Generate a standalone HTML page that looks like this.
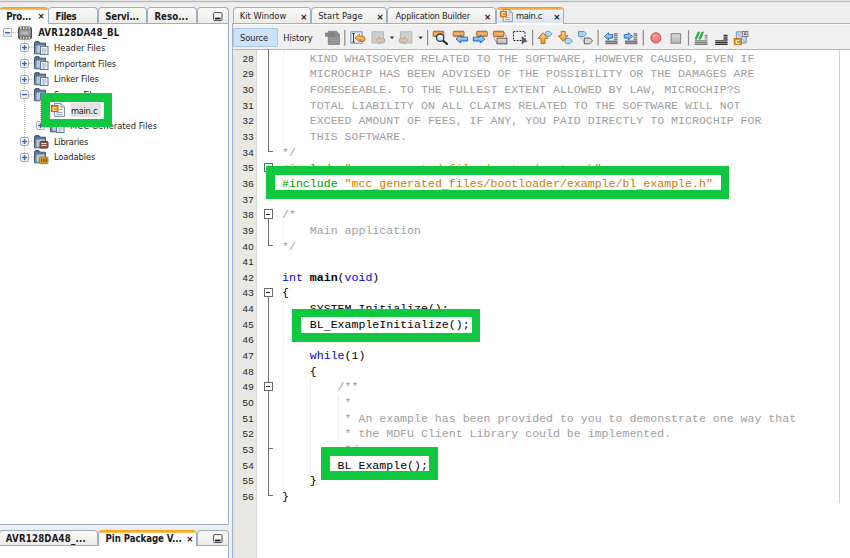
<!DOCTYPE html>
<html><head><meta charset="utf-8"><title>main.c</title>
<style>
*{box-sizing:border-box;margin:0;padding:0}
html,body{width:850px;height:558px;overflow:hidden;background:#fff}
body{position:relative;font-family:"DejaVu Sans Condensed","DejaVu Sans","Liberation Sans",sans-serif;font-stretch:condensed;font-size:9.25px;color:#111}
.a{position:absolute}
.code{position:absolute;left:282.0px;white-space:pre;font-family:"Liberation Mono",monospace;font-size:11.58px;line-height:15.645px;height:15.645px;color:#000}
.c{color:#a0a0a0}.k{color:#0000e6}.p{color:#009900}.s{color:#ce7b00}.b{font-weight:bold}.u{position:relative;top:2px}
.ln{position:absolute;left:232.5px;width:21.5px;text-align:right;font-family:"Liberation Sans",sans-serif;font-size:9.8px;letter-spacing:0.3px;line-height:15.645px;height:15.645px;color:#262626}
.g{position:absolute;background:#0fc83f}
.w{position:absolute;background:#fff}
</style></head><body>

<div class="a" style="left:0;top:0;width:850px;height:24px;background:#eeeeee"></div>
<div class="a" style="left:0;top:0;width:850px;height:1px;background:#e2e2e2"></div>
<div class="a" style="left:0;top:1px;width:850px;height:1px;background:#b9b9b9"></div>
<div class="a" style="left:0;top:2px;width:850px;height:1px;background:#e4e4e4"></div>
<div class="a" style="left:229px;top:23px;width:4px;height:535px;background:#f4f4f4"></div>
<div class="a" style="left:0;top:525px;width:233px;height:33px;background:#eeeeee"></div>
<div class="a" style="left:-1px;top:22.5px;width:230px;height:502.6px;background:#fff;border:1px solid #9db0c9"></div>
<div class="a" style="left:48px;top:7px;width:50px;height:16px;background:linear-gradient(#f9f9f6,#ecece8);border:1px solid #9db0c9;border-bottom:none;border-radius:4px 4px 0 0"></div>
<div class="a" style="left:98px;top:7px;width:49px;height:16px;background:linear-gradient(#f9f9f6,#ecece8);border:1px solid #9db0c9;border-bottom:none;border-radius:4px 4px 0 0"></div>
<div class="a" style="left:147px;top:7px;width:49.5px;height:16px;background:linear-gradient(#f9f9f6,#ecece8);border:1px solid #9db0c9;border-bottom:none;border-radius:4px 4px 0 0"></div>
<div class="a" style="left:196.5px;top:7px;width:32.5px;height:16px;background:linear-gradient(#f9f9f6,#ecece8);border:1px solid #9db0c9;border-bottom:none;border-radius:4px 4px 0 0"></div>
<div class="a" style="left:-1px;top:7.2px;width:49.5px;height:17.0px;background:#fff;border:1px solid #9db0c9;border-bottom:none;border-top:none;border-radius:4px 4px 0 0;overflow:hidden"><div class="a" style="left:-1px;top:0;right:-1px;height:3px;background:linear-gradient(#f29a14,#fbc565);border-radius:4px 4px 0 0"></div></div>
<div class="a" style="left:6.20px;top:9.88px;font-size:9.6px;line-height:14px;height:14px;white-space:nowrap;letter-spacing:-0.272px;color:#1b1b22;font-weight:bold;">Pro...</div>
<div class="a" style="left:36.10px;top:10.10px;width:10px;height:12px;line-height:12px;text-align:center;font-family:'DejaVu Sans','Liberation Sans',sans-serif;font-stretch:normal;font-weight:bold;font-size:8.600px;color:#151515">×</div>
<div class="a" style="left:55.60px;top:9.88px;font-size:9.6px;line-height:14px;height:14px;white-space:nowrap;letter-spacing:-0.453px;color:#1b1b22;font-weight:bold;">Files</div>
<div class="a" style="left:105.20px;top:9.88px;font-size:9.6px;line-height:14px;height:14px;white-space:nowrap;letter-spacing:-0.136px;color:#1b1b22;font-weight:bold;">Servi...</div>
<div class="a" style="left:154.40px;top:9.88px;font-size:9.6px;line-height:14px;height:14px;white-space:nowrap;letter-spacing:0.063px;color:#1b1b22;font-weight:bold;">Reso...</div>
<svg class="a" style="left:213px;top:11.5px" width="10" height="10" viewBox="0 0 10 10"><rect x="0.600" y="0.600" width="8.400" height="8" rx="1" fill="#f7f7f7" stroke="#4c4c4c" stroke-width="1"/><rect x="2" y="5.600" width="5.600" height="1.800" fill="#1e1e1e"/></svg>
<div class="a" style="left:23.5px;top:39px;width:0;height:118.2px;border-left:1px dotted #b9b9b9"></div>
<div class="a" style="left:12px;top:31.7px;width:6px;height:0;border-top:1px dotted #b9b9b9"></div>
<svg class="a" style="left:2.60px;top:27.70px" width="9.4" height="9.4" viewBox="0 0 9.4 9.4"><rect x="0.5" y="0.5" width="8.4" height="8.4" rx="1.6" fill="#fbfbfc" stroke="#a3a7ae" stroke-width="1"/><rect x="1.3" y="5.0" width="6.800000000000001" height="2.8000000000000003" fill="#e6e8ec"/><path d="M2.1 4.7 H7.300000000000001" stroke="#4567b8" stroke-width="1.4"/></svg>
<svg class="a" style="left:18px;top:25.500px" width="14" height="14" viewBox="0 0 14 14"><defs><linearGradient id="cg" x1="0" y1="0" x2="0" y2="1"><stop offset="0" stop-color="#6a6a6a"/><stop offset="0.5" stop-color="#8c8c8c"/><stop offset="1" stop-color="#5c5c5c"/></linearGradient></defs><rect x="0.5" y="1" width="13" height="12" rx="1.8" fill="url(#cg)" stroke="#4a4a4a"/><rect x="1.5" y="4.300" width="11" height="5.400" fill="#9a9a9a"/><rect x="3.500" y="5.600" width="7" height="2.800" fill="#b8b8b8"/><path d="M2.800 1 V3.300 M5.600 1 V3.300 M8.400 1 V3.300 M11.200 1 V3.300 M2.800 10.700 V13 M5.600 10.700 V13 M8.400 10.700 V13 M11.200 10.700 V13" stroke="#d0d0d0" stroke-width="1.500"/></svg>
<div class="a" style="left:38.20px;top:25.98px;font-size:9.6px;line-height:14px;height:14px;white-space:nowrap;letter-spacing:0.115px;color:#1b1b22;font-weight:bold;">AVR128DA48_BL</div>
<div class="a" style="left:28px;top:47.3px;width:6px;height:0;border-top:1px dotted #b9b9b9"></div>
<svg class="a" style="left:19.50px;top:43.33px" width="9" height="9" viewBox="0 0 9 9"><rect x="0.5" y="0.5" width="8" height="8" rx="1.6" fill="#fbfbfc" stroke="#a3a7ae" stroke-width="1"/><rect x="1.3" y="4.8" width="6.4" height="2.6" fill="#e6e8ec"/><path d="M1.9 4.5 H7.1" stroke="#4567b8" stroke-width="1.4"/><path d="M4.5 1.9 V7.1" stroke="#4567b8" stroke-width="1.4"/></svg>
<svg class="a" style="left:34px;top:40.830000000000005px" width="15" height="14" viewBox="0 0 15 14"><defs><linearGradient id="fg" x1="0" y1="0" x2="0" y2="1"><stop offset="0" stop-color="#4e6784"/><stop offset="1" stop-color="#9db3cc"/></linearGradient></defs><path d="M0.5 2.2 Q0.5 0.6 2 0.6 L5 0.6 L6.5 2.2 L11.5 2.2 L11.5 12.8 L0.5 12.8 Z" fill="url(#fg)" stroke="#43597a" stroke-width="1"/><path d="M2 5.2 L3 4 L11 4 L11 12.3 L2 12.3 Z" fill="#b5c8dc" stroke="#5d7695" stroke-width="0.8"/><rect x="6.5" y="5.5" width="7.5" height="8" fill="#f6f8fa" stroke="#61768f" stroke-width="1"/><path d="M8 8 H12.5 M8 10 H12.5 M8 12 H11.5" stroke="#93a3b7" stroke-width="1"/></svg>
<div class="a" style="left:54.10px;top:40.93px;font-size:9.25px;line-height:14px;height:14px;white-space:nowrap;letter-spacing:0.004px;color:#1b1b22;">Header Files</div>
<div class="a" style="left:28px;top:63.0px;width:6px;height:0;border-top:1px dotted #b9b9b9"></div>
<svg class="a" style="left:19.50px;top:58.96px" width="9" height="9" viewBox="0 0 9 9"><rect x="0.5" y="0.5" width="8" height="8" rx="1.6" fill="#fbfbfc" stroke="#a3a7ae" stroke-width="1"/><rect x="1.3" y="4.8" width="6.4" height="2.6" fill="#e6e8ec"/><path d="M1.9 4.5 H7.1" stroke="#4567b8" stroke-width="1.4"/><path d="M4.5 1.9 V7.1" stroke="#4567b8" stroke-width="1.4"/></svg>
<svg class="a" style="left:34px;top:56.46000000000001px" width="15" height="14" viewBox="0 0 15 14"><defs><linearGradient id="fg" x1="0" y1="0" x2="0" y2="1"><stop offset="0" stop-color="#4e6784"/><stop offset="1" stop-color="#9db3cc"/></linearGradient></defs><path d="M0.5 2.2 Q0.5 0.6 2 0.6 L5 0.6 L6.5 2.2 L11.5 2.2 L11.5 12.8 L0.5 12.8 Z" fill="url(#fg)" stroke="#43597a" stroke-width="1"/><path d="M2 5.2 L3 4 L11 4 L11 12.3 L2 12.3 Z" fill="#b5c8dc" stroke="#5d7695" stroke-width="0.8"/><rect x="6.5" y="5.5" width="7.5" height="8" fill="#f6f8fa" stroke="#61768f" stroke-width="1"/><path d="M8 8 H12.5 M8 10 H12.5 M8 12 H11.5" stroke="#93a3b7" stroke-width="1"/></svg>
<div class="a" style="left:54.10px;top:56.56px;font-size:9.25px;line-height:14px;height:14px;white-space:nowrap;letter-spacing:0.000px;color:#1b1b22;">Important Files</div>
<div class="a" style="left:28px;top:78.6px;width:6px;height:0;border-top:1px dotted #b9b9b9"></div>
<svg class="a" style="left:19.50px;top:74.59px" width="9" height="9" viewBox="0 0 9 9"><rect x="0.5" y="0.5" width="8" height="8" rx="1.6" fill="#fbfbfc" stroke="#a3a7ae" stroke-width="1"/><rect x="1.3" y="4.8" width="6.4" height="2.6" fill="#e6e8ec"/><path d="M1.9 4.5 H7.1" stroke="#4567b8" stroke-width="1.4"/><path d="M4.5 1.9 V7.1" stroke="#4567b8" stroke-width="1.4"/></svg>
<svg class="a" style="left:34px;top:72.09px" width="15" height="14" viewBox="0 0 15 14"><defs><linearGradient id="fg" x1="0" y1="0" x2="0" y2="1"><stop offset="0" stop-color="#4e6784"/><stop offset="1" stop-color="#9db3cc"/></linearGradient></defs><path d="M0.5 2.2 Q0.5 0.6 2 0.6 L5 0.6 L6.5 2.2 L11.5 2.2 L11.5 12.8 L0.5 12.8 Z" fill="url(#fg)" stroke="#43597a" stroke-width="1"/><path d="M2 5.2 L3 4 L11 4 L11 12.3 L2 12.3 Z" fill="#b5c8dc" stroke="#5d7695" stroke-width="0.8"/><rect x="6.5" y="5.5" width="7.5" height="8" fill="#f6f8fa" stroke="#61768f" stroke-width="1"/><path d="M8 8 H12.5 M8 10 H12.5 M8 12 H11.5" stroke="#93a3b7" stroke-width="1"/></svg>
<div class="a" style="left:54.10px;top:72.19px;font-size:9.25px;line-height:14px;height:14px;white-space:nowrap;letter-spacing:-0.127px;color:#1b1b22;">Linker Files</div>
<div class="a" style="left:28px;top:94.2px;width:6px;height:0;border-top:1px dotted #b9b9b9"></div>
<svg class="a" style="left:19.50px;top:90.22px" width="9" height="9" viewBox="0 0 9 9"><rect x="0.5" y="0.5" width="8" height="8" rx="1.6" fill="#fbfbfc" stroke="#a3a7ae" stroke-width="1"/><rect x="1.3" y="4.8" width="6.4" height="2.6" fill="#e6e8ec"/><path d="M1.9 4.5 H7.1" stroke="#4567b8" stroke-width="1.4"/></svg>
<svg class="a" style="left:34px;top:87.72000000000001px" width="15" height="14" viewBox="0 0 15 14"><defs><linearGradient id="fg" x1="0" y1="0" x2="0" y2="1"><stop offset="0" stop-color="#4e6784"/><stop offset="1" stop-color="#9db3cc"/></linearGradient></defs><path d="M0.5 2.2 Q0.5 0.6 2 0.6 L5 0.6 L6.5 2.2 L11.5 2.2 L11.5 12.8 L0.5 12.8 Z" fill="url(#fg)" stroke="#43597a" stroke-width="1"/><path d="M2 5.2 L3 4 L11 4 L11 12.3 L2 12.3 Z" fill="#b5c8dc" stroke="#5d7695" stroke-width="0.8"/><rect x="6.5" y="5.5" width="7.5" height="8" fill="#f6f8fa" stroke="#61768f" stroke-width="1"/><path d="M8 8 H12.5 M8 10 H12.5 M8 12 H11.5" stroke="#93a3b7" stroke-width="1"/></svg>
<div class="a" style="left:54.10px;top:87.82px;font-size:9.25px;line-height:14px;height:14px;white-space:nowrap;letter-spacing:-0.264px;color:#1b1b22;">Source Files</div>
<div class="a" style="left:39.5px;top:99.7px;width:0;height:26.3px;border-left:1px dotted #b9b9b9"></div>
<div class="a" style="left:44px;top:125.5px;width:6px;height:0;border-top:1px dotted #b9b9b9"></div>
<svg class="a" style="left:35.50px;top:121.48px" width="9" height="9" viewBox="0 0 9 9"><rect x="0.5" y="0.5" width="8" height="8" rx="1.6" fill="#fbfbfc" stroke="#a3a7ae" stroke-width="1"/><rect x="1.3" y="4.8" width="6.4" height="2.6" fill="#e6e8ec"/><path d="M1.9 4.5 H7.1" stroke="#4567b8" stroke-width="1.4"/><path d="M4.5 1.9 V7.1" stroke="#4567b8" stroke-width="1.4"/></svg>
<svg class="a" style="left:50px;top:118.98px" width="15" height="14" viewBox="0 0 15 14"><defs><linearGradient id="fg" x1="0" y1="0" x2="0" y2="1"><stop offset="0" stop-color="#4e6784"/><stop offset="1" stop-color="#9db3cc"/></linearGradient></defs><path d="M0.5 2.2 Q0.5 0.6 2 0.6 L5 0.6 L6.5 2.2 L11.5 2.2 L11.5 12.8 L0.5 12.8 Z" fill="url(#fg)" stroke="#43597a" stroke-width="1"/><path d="M2 5.2 L3 4 L11 4 L11 12.3 L2 12.3 Z" fill="#b5c8dc" stroke="#5d7695" stroke-width="0.8"/><rect x="6.5" y="5.5" width="7.5" height="8" fill="#f6f8fa" stroke="#61768f" stroke-width="1"/><path d="M8 8 H12.5 M8 10 H12.5 M8 12 H11.5" stroke="#93a3b7" stroke-width="1"/></svg>
<div class="a" style="left:70.10px;top:119.08px;font-size:9.25px;line-height:14px;height:14px;white-space:nowrap;letter-spacing:0.025px;color:#1b1b22;">MCC Generated Files</div>
<div class="a" style="left:28px;top:141.1px;width:6px;height:0;border-top:1px dotted #b9b9b9"></div>
<svg class="a" style="left:19.50px;top:137.11px" width="9" height="9" viewBox="0 0 9 9"><rect x="0.5" y="0.5" width="8" height="8" rx="1.6" fill="#fbfbfc" stroke="#a3a7ae" stroke-width="1"/><rect x="1.3" y="4.8" width="6.4" height="2.6" fill="#e6e8ec"/><path d="M1.9 4.5 H7.1" stroke="#4567b8" stroke-width="1.4"/><path d="M4.5 1.9 V7.1" stroke="#4567b8" stroke-width="1.4"/></svg>
<svg class="a" style="left:34px;top:134.61px" width="15" height="14" viewBox="0 0 15 14"><defs><linearGradient id="fg" x1="0" y1="0" x2="0" y2="1"><stop offset="0" stop-color="#4e6784"/><stop offset="1" stop-color="#9db3cc"/></linearGradient></defs><path d="M0.5 2.2 Q0.5 0.6 2 0.6 L5 0.6 L6.5 2.2 L11.5 2.2 L11.5 12.8 L0.5 12.8 Z" fill="url(#fg)" stroke="#43597a" stroke-width="1"/><path d="M2 5.2 L3 4 L11 4 L11 12.3 L2 12.3 Z" fill="#b5c8dc" stroke="#5d7695" stroke-width="0.8"/><rect x="6" y="6.5" width="8" height="6.500" rx="1" fill="#8e5a46" stroke="#5d3a2c" stroke-width="1"/><path d="M7.5 8.500 H12.5 M7.5 10.500 H12.5" stroke="#f0d8c4" stroke-width="1"/></svg>
<div class="a" style="left:53.90px;top:134.71px;font-size:9.25px;line-height:14px;height:14px;white-space:nowrap;letter-spacing:-0.194px;color:#1b1b22;">Libraries</div>
<div class="a" style="left:28px;top:156.7px;width:6px;height:0;border-top:1px dotted #b9b9b9"></div>
<svg class="a" style="left:19.50px;top:152.74px" width="9" height="9" viewBox="0 0 9 9"><rect x="0.5" y="0.5" width="8" height="8" rx="1.6" fill="#fbfbfc" stroke="#a3a7ae" stroke-width="1"/><rect x="1.3" y="4.8" width="6.4" height="2.6" fill="#e6e8ec"/><path d="M1.9 4.5 H7.1" stroke="#4567b8" stroke-width="1.4"/><path d="M4.5 1.9 V7.1" stroke="#4567b8" stroke-width="1.4"/></svg>
<svg class="a" style="left:34px;top:150.24px" width="15" height="14" viewBox="0 0 15 14"><defs><linearGradient id="fg" x1="0" y1="0" x2="0" y2="1"><stop offset="0" stop-color="#4e6784"/><stop offset="1" stop-color="#9db3cc"/></linearGradient></defs><path d="M0.5 2.2 Q0.5 0.6 2 0.6 L5 0.6 L6.5 2.2 L11.5 2.2 L11.5 12.8 L0.5 12.8 Z" fill="url(#fg)" stroke="#43597a" stroke-width="1"/><path d="M2 5.2 L3 4 L11 4 L11 12.3 L2 12.3 Z" fill="#b5c8dc" stroke="#5d7695" stroke-width="0.8"/><rect x="5.500" y="7" width="8.500" height="6.500" rx="0.5" fill="#dfa32a" stroke="#9a7015" stroke-width="0.8"/><path d="M7.5 8.500 V12 M9.5 8.500 V12 M11 8.500 V12 M12.5 8.500 V12" stroke="#7a5200" stroke-width="0.9"/></svg>
<div class="a" style="left:53.90px;top:150.34px;font-size:9.25px;line-height:14px;height:14px;white-space:nowrap;letter-spacing:-0.089px;color:#1b1b22;">Loadables</div>
<div class="g" style="left:41px;top:93px;width:71px;height:34.3px"></div>
<div class="w" style="left:49.5px;top:102px;width:54.5px;height:16.8px"></div>
<div class="a" style="left:70.5px;top:103px;width:30.3px;height:14.4px;background:#e2e2e2"></div>
<div class="a" style="left:70.90px;top:103.65px;font-size:9.25px;line-height:14px;height:14px;white-space:nowrap;letter-spacing:-0.283px;color:#1b1b22;">main.c</div>
<svg class="a" style="left:51px;top:103px" width="14" height="14" viewBox="0 0 14 14"><path d="M3.5 0.5 H10 L13.5 4 V13.5 H3.5 Z" fill="#f3f5f8" stroke="#7d8ea3"/><path d="M10 0.5 V4 H13.5" fill="#dfe5ec" stroke="#7d8ea3"/><path d="M8 6.500 H11.5 M5.5 9.5 H11.5 M5.5 11.5 H11.5" stroke="#9aa8b8"/><rect x="0.5" y="2.5" width="6.5" height="6" fill="#ea8c1f" stroke="#c76c07"/><text x="3.800" y="7.700" text-anchor="middle" font-family="Liberation Sans, sans-serif" font-size="6.200" font-weight="bold" fill="#fff">C</text></svg>
<div class="a" style="left:-1px;top:544.6px;width:230px;height:15px;background:#fff;border:1px solid #9db0c9"></div>
<div class="a" style="left:-1px;top:529.8px;width:98.5px;height:15.200000000000045px;background:linear-gradient(#f9f9f6,#ecece8);border:1px solid #9db0c9;border-bottom:none;border-radius:4px 4px 0 0"></div>
<div class="a" style="left:197px;top:529.8px;width:32px;height:15.200000000000045px;background:linear-gradient(#f9f9f6,#ecece8);border:1px solid #9db0c9;border-bottom:none;border-radius:4px 4px 0 0"></div>
<div class="a" style="left:97.5px;top:530.0px;width:99.80000000000001px;height:16.200000000000045px;background:#fff;border:1px solid #9db0c9;border-bottom:none;border-top:none;border-radius:4px 4px 0 0;overflow:hidden"><div class="a" style="left:-1px;top:0;right:-1px;height:3px;background:linear-gradient(#f29a14,#fbc565);border-radius:4px 4px 0 0"></div></div>
<div class="a" style="left:5.80px;top:532.48px;font-size:9.6px;line-height:14px;height:14px;white-space:nowrap;letter-spacing:0.201px;color:#1b1b22;font-weight:bold;">AVR128DA48_...</div>
<div class="a" style="left:105.60px;top:532.48px;font-size:9.6px;line-height:14px;height:14px;white-space:nowrap;letter-spacing:-0.074px;color:#1b1b22;font-weight:bold;">Pin Package V...</div>
<div class="a" style="left:184.90px;top:532.90px;width:10px;height:12px;line-height:12px;text-align:center;font-family:'DejaVu Sans','Liberation Sans',sans-serif;font-stretch:normal;font-weight:bold;font-size:8.600px;color:#151515">×</div>
<svg class="a" style="left:213px;top:534px" width="10" height="10" viewBox="0 0 10 10"><rect x="0.600" y="0.600" width="8.400" height="8" rx="1" fill="#f7f7f7" stroke="#4c4c4c" stroke-width="1"/><rect x="2" y="5.600" width="5.600" height="1.800" fill="#1e1e1e"/></svg>
<div class="a" style="left:232px;top:22.5px;width:620px;height:540px;background:#fff;border:1px solid #9db0c9"></div>
<div class="a" style="left:232.5px;top:7px;width:78.0px;height:16px;background:linear-gradient(#f9f9f6,#ecece8);border:1px solid #9db0c9;border-bottom:none;border-radius:4px 4px 0 0"></div>
<div class="a" style="left:310.5px;top:7px;width:76.5px;height:16px;background:linear-gradient(#f9f9f6,#ecece8);border:1px solid #9db0c9;border-bottom:none;border-radius:4px 4px 0 0"></div>
<div class="a" style="left:387px;top:7px;width:108.80000000000001px;height:16px;background:linear-gradient(#f9f9f6,#ecece8);border:1px solid #9db0c9;border-bottom:none;border-radius:4px 4px 0 0"></div>
<div class="a" style="left:495.8px;top:7.2px;width:68.49999999999994px;height:17.0px;background:#fff;border:1px solid #9db0c9;border-bottom:none;border-top:none;border-radius:4px 4px 0 0;overflow:hidden"><div class="a" style="left:-1px;top:0;right:-1px;height:3px;background:linear-gradient(#f29a14,#fbc565);border-radius:4px 4px 0 0"></div></div>
<div class="a" style="left:496.8px;top:10px;width:66.5px;height:13px;background:linear-gradient(#f4f6fb,#d9e2f1)"></div>
<div class="a" style="left:239.80px;top:9.20px;font-size:9.25px;line-height:14px;height:14px;white-space:nowrap;letter-spacing:-0.008px;color:#1e1e26;">Kit Window</div>
<div class="a" style="left:298.80px;top:10.50px;width:10px;height:12px;line-height:12px;text-align:center;font-family:'DejaVu Sans','Liberation Sans',sans-serif;font-stretch:normal;font-weight:bold;font-size:8.600px;color:#151515">×</div>
<div class="a" style="left:318.20px;top:9.20px;font-size:9.25px;line-height:14px;height:14px;white-space:nowrap;letter-spacing:0.147px;color:#1e1e26;">Start Page</div>
<div class="a" style="left:375.10px;top:10.50px;width:10px;height:12px;line-height:12px;text-align:center;font-family:'DejaVu Sans','Liberation Sans',sans-serif;font-stretch:normal;font-weight:bold;font-size:8.600px;color:#151515">×</div>
<div class="a" style="left:395.60px;top:9.20px;font-size:9.25px;line-height:14px;height:14px;white-space:nowrap;letter-spacing:-0.221px;color:#1e1e26;">Application Builder</div>
<div class="a" style="left:482.70px;top:10.50px;width:10px;height:12px;line-height:12px;text-align:center;font-family:'DejaVu Sans','Liberation Sans',sans-serif;font-stretch:normal;font-weight:bold;font-size:8.600px;color:#151515">×</div>
<div class="a" style="left:516.10px;top:9.20px;font-size:9.25px;line-height:14px;height:14px;white-space:nowrap;letter-spacing:-0.343px;color:#1e1e26;">main.c</div>
<div class="a" style="left:551.90px;top:10.50px;width:10px;height:12px;line-height:12px;text-align:center;font-family:'DejaVu Sans','Liberation Sans',sans-serif;font-stretch:normal;font-weight:bold;font-size:8.600px;color:#151515">×</div>
<svg class="a" style="left:499.800px;top:9.400px" width="12.800" height="12.800" viewBox="0 0 14 14"><path d="M3.5 0.5 H10 L13.5 4 V13.5 H3.5 Z" fill="#f3f5f8" stroke="#7d8ea3"/><path d="M10 0.5 V4 H13.5" fill="#dfe5ec" stroke="#7d8ea3"/><path d="M8 6.500 H11.5 M5.5 9.5 H11.5 M5.5 11.5 H11.5" stroke="#9aa8b8"/><rect x="0.5" y="2.5" width="6.5" height="6" fill="#ea8c1f" stroke="#c76c07"/><text x="3.800" y="7.700" text-anchor="middle" font-family="Liberation Sans, sans-serif" font-size="6.200" font-weight="bold" fill="#fff">C</text></svg>
<div class="a" style="left:233px;top:23.5px;width:617px;height:26px;background:#f0f0f0;border-bottom:1.5px solid #a8b9d0;border-top:1px solid #fbfbf4"></div>
<div class="a" style="left:233px;top:27.5px;width:44.6px;height:19.5px;background:#cde2f8;border:1px solid #a6c8ec;border-radius:1px"></div>
<div class="a" style="left:240.00px;top:30.80px;font-size:9.25px;line-height:14px;height:14px;white-space:nowrap;letter-spacing:-0.076px;color:#1e1e26;">Source</div>
<div class="a" style="left:283.20px;top:30.80px;font-size:9.25px;line-height:14px;height:14px;white-space:nowrap;letter-spacing:-0.035px;color:#1e1e26;">History</div>
<div class="a" style="left:233px;top:50px;width:24px;height:509px;background:#e9e8e2"></div>
<div class="a" style="left:256.4px;top:50px;width:1px;height:509px;background:#d9d8d2"></div>
<div class="a" style="left:839px;top:50px;width:1px;height:453px;background:#f9bdbd"></div>
<svg class="a" style="left:320px;top:26px" width="440" height="24" viewBox="320 26 440 24"><defs><linearGradient id="og" x1="0" y1="0" x2="0" y2="1"><stop offset="0" stop-color="#e08a2c"/><stop offset="0.5" stop-color="#f4b872"/><stop offset="1" stop-color="#dd8a30"/></linearGradient><linearGradient id="bg" x1="0" y1="0" x2="0" y2="1"><stop offset="0" stop-color="#d4eafd"/><stop offset="1" stop-color="#4d99ea"/></linearGradient><linearGradient id="oa" x1="0" y1="0" x2="0" y2="1"><stop offset="0" stop-color="#fbd08e"/><stop offset="1" stop-color="#ee9a2e"/></linearGradient><linearGradient id="gg" x1="0" y1="0" x2="0" y2="1"><stop offset="0" stop-color="#dcdcdc"/><stop offset="1" stop-color="#b4b4b4"/></linearGradient><radialGradient id="rg" cx="0.4" cy="0.35" r="0.7"><stop offset="0" stop-color="#f9a0a0"/><stop offset="1" stop-color="#ee6a6a"/></radialGradient></defs><path d="M328.3 31.3 H336.5 L339.5 34.3 V44.4 H328.3 Z" fill="#8e8e8e" stroke="#7c7c7c" stroke-width="0.7"/><rect x="325.4" y="33" width="9" height="3.2" fill="#858585" stroke="#767676" stroke-width="0.6"/><path d="M330 38.2 H338 M330 40.3 H338 M330 42.400 H338" stroke="#a2a2a2" stroke-width="0.9"/><path d="M344.8 30 V45.5" stroke="#8a8a8a" stroke-width="1.2"/><rect x="350.9" y="31.800" width="11.200" height="11.400" fill="#eef3fa" stroke="#6f8fbd" stroke-width="1"/><path d="M353.600 33.500 V42 M352.400 33.500 H354.800 M352.400 42 H354.800" stroke="#2a3340" stroke-width="1" fill="none"/><path d="M355 38 L359.300 34.200 V36.300 H362 Q365.200 36.300 365.200 38.900 Q365.200 41.500 362 41.500 H360.500 V39.700 H359.300 V41.800 Z" fill="url(#oa)" stroke="#b06a12" stroke-width="0.8" stroke-linejoin="round"/><rect x="372" y="31.800" width="11.400" height="11.200" fill="#cdcdcd" stroke="#b2b2b2" stroke-width="0.9"/><path d="M375.7 40.4 L379.9 36.8 V38.699999999999996 H384.7 V42.1 H379.9 V44.0 Z" fill="#dcc8ac" stroke="#b9a88f" stroke-width="0.9" stroke-linejoin="round"/><path d="M389.800 36.600 H394.300 L392.050 39.200 Z" fill="#3c3c3c"/><rect x="400.400" y="31.800" width="11.400" height="11.200" fill="#cdcdcd" stroke="#b2b2b2" stroke-width="0.9"/><path d="M408.2 40.4 L404.0 36.8 V38.699999999999996 H399.2 V42.1 H404.0 V44.0 Z" fill="#dcc8ac" stroke="#b9a88f" stroke-width="0.9" stroke-linejoin="round"/><path d="M418.400 36.600 H422.900 L420.650 39.200 Z" fill="#3c3c3c"/><path d="M427.6 30 V45.5" stroke="#8a8a8a" stroke-width="1.2"/><rect x="433.2" y="31.2" width="10.600000000000023" height="5.199999999999999" rx="0.8" fill="url(#og)" stroke="#a5601a" stroke-width="0.9"/><path d="M443 40.500 L447 44" stroke="#1e1e1e" stroke-width="1.900" stroke-linecap="round"/><circle cx="440.200" cy="37.700" r="3.700" fill="#d4e6f6" stroke="#2f3e52" stroke-width="1.300"/><path d="M438 36.500 Q440 35 442.300 36.300" stroke="#fff" stroke-width="0.9" fill="none"/><rect x="453.2" y="31.2" width="10.800000000000011" height="5.199999999999999" rx="0.8" fill="url(#og)" stroke="#a5601a" stroke-width="0.9"/><path d="M456 39.1 L460.6 35.2 V37.2 H467.6 V41.0 H460.6 V43.0 Z" fill="url(#bg)" stroke="#1b5bb0" stroke-width="0.9" stroke-linejoin="round"/><rect x="476.7" y="31.2" width="10.600000000000023" height="5.199999999999999" rx="0.8" fill="url(#og)" stroke="#a5601a" stroke-width="0.9"/><path d="M484.9 39.1 L480.29999999999995 35.2 V37.2 H473.3 V41.0 H480.29999999999995 V43.0 Z" fill="url(#bg)" stroke="#1b5bb0" stroke-width="0.9" stroke-linejoin="round"/><rect x="493.4" y="31.2" width="10.400000000000034" height="5.5000000000000036" rx="0.8" fill="url(#og)" stroke="#a5601a" stroke-width="0.9"/><path d="M494 37.500 L497 43.500 M504.200 32 L506.800 38" stroke="#8a8a8a" stroke-width="0.7"/><rect x="497" y="38.200" width="9.900" height="5.700" fill="url(#gg)" stroke="#555" stroke-width="0.9"/><rect x="513.500" y="31.500" width="11.500" height="9" fill="none" stroke="#2a2a2a" stroke-width="1" stroke-dasharray="1.800 1.200"/><path d="M522.200 36.600 L527 41.600 L524.500 41.800 L522.200 44 Z" fill="#5a6680" stroke="#2a3040" stroke-width="0.6"/><path d="M532.6 30 V45.5" stroke="#8a8a8a" stroke-width="1.2"/><path d="M546.5 31.3 H549.7 L552.2 33.8 L549.7 36.3 H546.5 L545 33.8 Z" fill="#a8dcf2" stroke="#4a9ccc" stroke-width="0.9" stroke-linejoin="round"/><path d="M543 32.800 L547.900 38.300 H545 V43.600 H541 V38.300 H538.100 Z" fill="url(#oa)" stroke="#b06a12" stroke-width="0.9" stroke-linejoin="round"/><path d="M566.1 38.4 H569.9 L572.4 41.0 L569.9 43.6 H566.1 L564.6 41.0 Z" fill="#a8dcf2" stroke="#4a9ccc" stroke-width="0.9" stroke-linejoin="round"/><path d="M563.200 41.300 L568.100 35.800 H565.200 V31.300 H561.200 V35.800 H558.300 Z" fill="url(#oa)" stroke="#b06a12" stroke-width="0.9" stroke-linejoin="round"/><path d="M578.700 31.400 H584 L586.500 33.900 L584 36.400 H578.700 Z" fill="#a9d8f4" stroke="#3f86bd" stroke-width="0.9" stroke-linejoin="round"/><path d="M584.300 38 H589.800 L592.500 40.900 L589.800 43.800 H584.300 Z" fill="#d6d6d6" stroke="#4e4e4e" stroke-width="0.9" stroke-linejoin="round"/><path d="M580.500 37 L584 42" stroke="#666" stroke-width="0.8" stroke-dasharray="1 0.8"/><path d="M598.1 30 V45.5" stroke="#8a8a8a" stroke-width="1.2"/><path d="M605.3 41.300 H617.7 M605.3 43.400 H617.7" stroke="#777" stroke-width="1.700"/><path d="M613.8 33.700 H617.7 M613.8 35.600 H617.7 M613.8 37.500 H617.7 M613.8 39.400 H617.7" stroke="#8a8a8a" stroke-width="1.500"/><path d="M604.4 36.4 L608.6 32.8 V34.699999999999996 H612.6 V38.1 H608.6 V40.0 Z" fill="url(#bg)" stroke="#1b5bb0" stroke-width="0.9" stroke-linejoin="round"/><path d="M625 41.300 H637.4 M625 43.400 H637.4" stroke="#777" stroke-width="1.700"/><path d="M633.5 33.700 H637.4 M633.5 35.600 H637.4 M633.5 37.500 H637.4 M633.5 39.400 H637.4" stroke="#8a8a8a" stroke-width="1.500"/><path d="M632.5 36.4 L628.3 32.8 V34.699999999999996 H624.3 V38.1 H628.3 V40.0 Z" fill="url(#bg)" stroke="#1b5bb0" stroke-width="0.9" stroke-linejoin="round"/><path d="M643.3 30 V45.5" stroke="#8a8a8a" stroke-width="1.2"/><circle cx="655.850" cy="37.900" r="5.100" fill="url(#rg)" stroke="#c04848" stroke-width="0.9"/><rect x="671.100" y="33.700" width="9.500" height="9.500" fill="url(#gg)" stroke="#868686" stroke-width="1"/><path d="M688.5 30 V45.5" stroke="#8a8a8a" stroke-width="1.2"/><path d="M694.800 40.800 H707.500 M694.800 42.700 H707.500 M694.800 44.400 H707.500" stroke="#777" stroke-width="1.200"/><path d="M704.600 35.400 H707.500 M704.600 37.200 H707.500 M704.600 39 H707.500" stroke="#888" stroke-width="1.200"/><path d="M696 38.600 L698.800 32.600 M699.800 38.600 L702.600 32.600" stroke="#2fae3a" stroke-width="2.300" stroke-linecap="round"/><path d="M715.200 40.800 H727.600 M715.200 42.700 H727.600 M715.200 44.400 H727.600" stroke="#333" stroke-width="1.300"/><path d="M723.500 35.400 H727.600 M723.500 37.200 H727.600 M723.500 39 H727.600" stroke="#333" stroke-width="1.300"/><path d="M736.300 31.800 H741.500 L746.200 37 V43 H736.300 Z" fill="#c4d8ee" stroke="#6b89b0" stroke-width="0.9"/><path d="M737.500 33 L745 42" stroke="#8aa4c6" stroke-width="0.8"/><rect x="742.300" y="31.600" width="5.600" height="4.900" fill="#f2f4f7" stroke="#5a6068" stroke-width="0.8"/><path d="M743.800 33 H746.600 M743.800 34.600 H746.600" stroke="#30343a" stroke-width="0.9"/><rect x="734.200" y="38.500" width="7.200" height="5.900" fill="#e88a1e" stroke="#c26806" stroke-width="0.8"/><text x="737.800" y="43.700" text-anchor="middle" font-family="Liberation Sans, sans-serif" font-size="6.200" font-weight="bold" fill="#fff">C</text></svg>
<div class="a" style="left:267.9px;top:49.00px;width:1px;height:102.56px;background:#6e6e6e"></div>
<div class="a" style="left:267.9px;top:151.06px;width:5px;height:1px;background:#6e6e6e"></div>
<div class="a" style="left:263.7px;top:162.50px;width:9.4px;height:9.4px;border:1px solid #6a6a6a;background:#fff"><div class="a" style="left:1.6px;top:3.2px;width:4.2px;height:1px;background:#2e2e2e"></div></div>
<div class="a" style="left:267.9px;top:214.13px;width:1px;height:31.29px;background:#6e6e6e"></div>
<div class="a" style="left:267.9px;top:244.92px;width:5px;height:1px;background:#6e6e6e"></div>
<div class="a" style="left:263.7px;top:209.43px;width:9.4px;height:9.4px;border:1px solid #6a6a6a;background:#fff"><div class="a" style="left:1.6px;top:3.2px;width:4.2px;height:1px;background:#2e2e2e"></div></div>
<div class="a" style="left:267.9px;top:292.35px;width:1px;height:203.36px;background:#6e6e6e"></div>
<div class="a" style="left:267.9px;top:495.20px;width:5px;height:1px;background:#6e6e6e"></div>
<div class="a" style="left:267.9px;top:448.28px;width:5px;height:1px;background:#6e6e6e"></div>
<div class="a" style="left:263.7px;top:287.65px;width:9.4px;height:9.4px;border:1px solid #6a6a6a;background:#fff"><div class="a" style="left:1.6px;top:3.2px;width:4.2px;height:1px;background:#2e2e2e"></div></div>
<div class="a" style="left:263.7px;top:381.50px;width:9.4px;height:9.4px;border:1px solid #6a6a6a;background:#fff"><div class="a" style="left:1.6px;top:3.2px;width:4.2px;height:1px;background:#2e2e2e"></div></div>
<div class="a" style="left:282.50px;top:50.80px;width:0;height:93.87px;border-left:1px dotted #e2e2e2"></div>
<div class="a" style="left:282.50px;top:222.89px;width:0;height:15.64px;border-left:1px dotted #e2e2e2"></div>
<div class="a" style="left:282.50px;top:301.12px;width:0;height:187.74px;border-left:1px dotted #e2e2e2"></div>
<div class="a" style="left:310.29px;top:379.35px;width:0;height:93.87px;border-left:1px dotted #e2e2e2"></div>
<div class="a" style="left:338.08px;top:394.99px;width:0;height:62.58px;border-left:1px dotted #e2e2e2"></div>
<div class="ln" style="top:50.80px">28</div>
<div class="code" style="top:50.80px"><span class="c">    KIND WHATSOEVER RELATED TO THE SOFTWARE, HOWEVER CAUSED, EVEN IF</span></div>
<div class="ln" style="top:66.44px">29</div>
<div class="code" style="top:66.44px"><span class="c">    MICROCHIP HAS BEEN ADVISED OF THE POSSIBILITY OR THE DAMAGES ARE</span></div>
<div class="ln" style="top:82.09px">30</div>
<div class="code" style="top:82.09px"><span class="c">    FORESEEABLE. TO THE FULLEST EXTENT ALLOWED BY LAW, MICROCHIP?S</span></div>
<div class="ln" style="top:97.73px">31</div>
<div class="code" style="top:97.73px"><span class="c">    TOTAL LIABILITY ON ALL CLAIMS RELATED TO THE SOFTWARE WILL NOT</span></div>
<div class="ln" style="top:113.38px">32</div>
<div class="code" style="top:113.38px"><span class="c">    EXCEED AMOUNT OF FEES, IF ANY, YOU PAID DIRECTLY TO MICROCHIP FOR</span></div>
<div class="ln" style="top:129.02px">33</div>
<div class="code" style="top:129.02px"><span class="c">    THIS SOFTWARE.</span></div>
<div class="ln" style="top:144.67px">34</div>
<div class="code" style="top:144.67px"><span class="c">*/</span></div>
<div class="ln" style="top:160.31px">35</div>
<div class="code" style="top:161.31px"><span class="p">#include </span><span class="s">&quot;mcc<span class="u">_</span>generated<span class="u">_</span>files/system/system.h&quot;</span></div>
<div class="ln" style="top:175.96px">36</div>
<div class="code" style="top:175.96px"><span class="p">#include </span><span class="s">&quot;mcc<span class="u">_</span>generated<span class="u">_</span>files/bootloader/example/bl<span class="u">_</span>example.h&quot;</span></div>
<div class="ln" style="top:191.61px">37</div>
<div class="ln" style="top:207.25px">38</div>
<div class="code" style="top:207.25px"><span class="c">/*</span></div>
<div class="ln" style="top:222.89px">39</div>
<div class="code" style="top:222.89px"><span class="c">    Main application</span></div>
<div class="ln" style="top:238.54px">40</div>
<div class="code" style="top:238.54px"><span class="c">*/</span></div>
<div class="ln" style="top:254.19px">41</div>
<div class="ln" style="top:269.83px">42</div>
<div class="code" style="top:269.83px"><span class="k">int</span> <span class="b">main</span>(<span class="k">void</span>)</div>
<div class="ln" style="top:285.47px">43</div>
<div class="code" style="top:285.47px">{</div>
<div class="ln" style="top:301.12px">44</div>
<div class="code" style="top:301.12px">    SYSTEM<span class="u">_</span>Initialize();</div>
<div class="ln" style="top:316.76px">45</div>
<div class="code" style="top:316.76px">    BL<span class="u">_</span>ExampleInitialize();</div>
<div class="ln" style="top:332.41px">46</div>
<div class="ln" style="top:348.06px">47</div>
<div class="code" style="top:348.06px">    <span class="k">while</span>(1)</div>
<div class="ln" style="top:363.70px">48</div>
<div class="code" style="top:363.70px">    {</div>
<div class="ln" style="top:379.35px">49</div>
<div class="code" style="top:379.35px"><span class="c">        /**</span></div>
<div class="ln" style="top:394.99px">50</div>
<div class="code" style="top:394.99px"><span class="c">         *</span></div>
<div class="ln" style="top:410.63px">51</div>
<div class="code" style="top:410.63px"><span class="c">         * An example has been provided to you to demonstrate one way that</span></div>
<div class="ln" style="top:426.28px">52</div>
<div class="code" style="top:426.28px"><span class="c">         * the MDFU Client Library could be implemented.</span></div>
<div class="ln" style="top:441.93px">53</div>
<div class="code" style="top:441.93px"><span class="c">         */</span></div>
<div class="ln" style="top:457.57px">54</div>
<div class="code" style="top:457.57px">        BL<span class="u">_</span>Example();</div>
<div class="ln" style="top:473.21px">55</div>
<div class="code" style="top:473.21px">    }</div>
<div class="ln" style="top:488.86px">56</div>
<div class="code" style="top:488.86px">}</div>
<div class="g" style="left:266px;top:166px;width:463px;height:32.5px"></div>
<div class="w" style="left:275px;top:175px;width:445.5px;height:15px;overflow:hidden"><div class="code" style="left:7.00px;top:0.96px"><span class="p">#include </span><span class="s">&quot;mcc<span class="u">_</span>generated<span class="u">_</span>files/bootloader/example/bl<span class="u">_</span>example.h&quot;</span></div></div>
<div class="g" style="left:291.5px;top:309px;width:188.0px;height:33px"></div>
<div class="w" style="left:300.5px;top:317px;width:171.0px;height:16px;overflow:hidden"><div class="code" style="left:-18.50px;top:-0.24px">    BL<span class="u">_</span>ExampleInitialize();</div></div>
<div class="g" style="left:321px;top:447px;width:116.5px;height:32.5px"></div>
<div class="w" style="left:329.5px;top:455.5px;width:99.5px;height:15.0px;overflow:hidden"><div class="code" style="left:-47.50px;top:2.07px">        BL<span class="u">_</span>Example();</div></div>
</body></html>
